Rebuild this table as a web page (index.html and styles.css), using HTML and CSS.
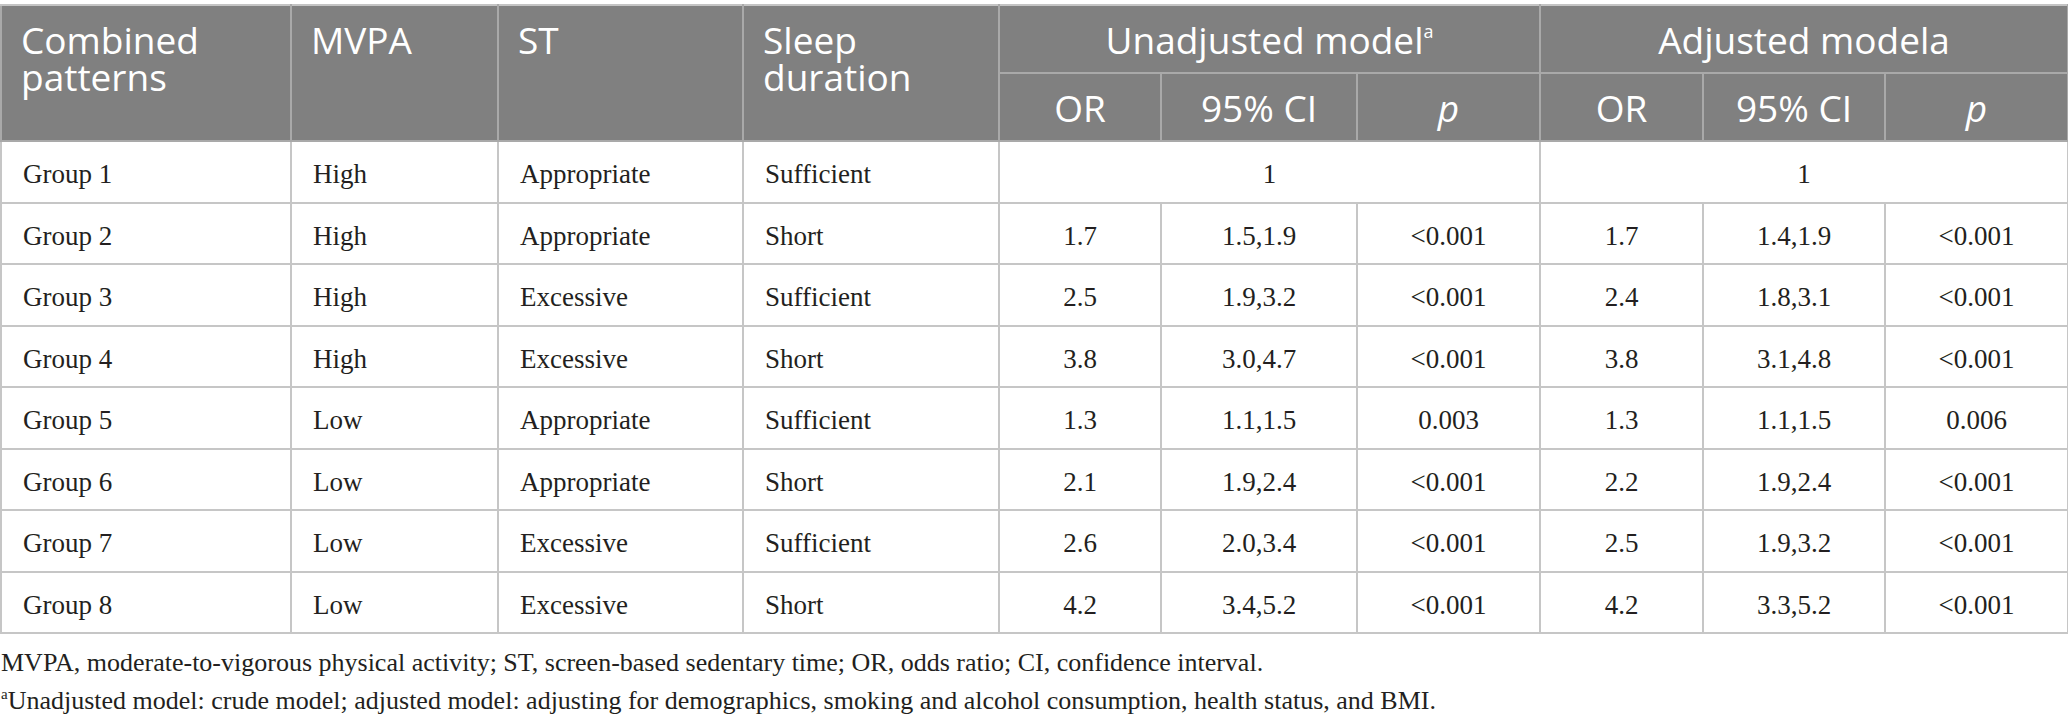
FILE: index.html
```html
<!DOCTYPE html>
<html lang="en">
<head>
<meta charset="utf-8">
<title>Combined patterns</title>
<link rel="stylesheet" href="styles.css">
</head>
<body>
<div class="page">
  <table class="data">
    <colgroup>
      <col class="w1"><col class="w2"><col class="w3"><col class="w4">
      <col class="w5"><col class="w6"><col class="w7">
      <col class="w8"><col class="w9"><col class="w10">
    </colgroup>
    <thead>
      <tr class="h1">
        <th rowspan="2" class="tl">Combined<br>patterns</th>
        <th rowspan="2" class="tl">MVPA</th>
        <th rowspan="2" class="tl">ST</th>
        <th rowspan="2" class="tl">Sleep<br>duration</th>
        <th colspan="3">Unadjusted model<sup>a</sup></th>
        <th colspan="3">Adjusted modela</th>
      </tr>
      <tr class="h2">
        <th>OR</th><th>95% CI</th><th><i>p</i></th>
        <th>OR</th><th>95% CI</th><th><i>p</i></th>
      </tr>
    </thead>
    <tbody>
      <tr>
        <td class="l">Group 1</td><td class="l">High</td><td class="l">Appropriate</td><td class="l">Sufficient</td>
        <td colspan="3">1</td><td colspan="3">1</td>
      </tr>
      <tr>
        <td class="l">Group 2</td><td class="l">High</td><td class="l">Appropriate</td><td class="l">Short</td>
        <td>1.7</td><td>1.5,1.9</td><td>&lt;0.001</td><td>1.7</td><td>1.4,1.9</td><td>&lt;0.001</td>
      </tr>
      <tr>
        <td class="l">Group 3</td><td class="l">High</td><td class="l">Excessive</td><td class="l">Sufficient</td>
        <td>2.5</td><td>1.9,3.2</td><td>&lt;0.001</td><td>2.4</td><td>1.8,3.1</td><td>&lt;0.001</td>
      </tr>
      <tr>
        <td class="l">Group 4</td><td class="l">High</td><td class="l">Excessive</td><td class="l">Short</td>
        <td>3.8</td><td>3.0,4.7</td><td>&lt;0.001</td><td>3.8</td><td>3.1,4.8</td><td>&lt;0.001</td>
      </tr>
      <tr>
        <td class="l">Group 5</td><td class="l">Low</td><td class="l">Appropriate</td><td class="l">Sufficient</td>
        <td>1.3</td><td>1.1,1.5</td><td>0.003</td><td>1.3</td><td>1.1,1.5</td><td>0.006</td>
      </tr>
      <tr>
        <td class="l">Group 6</td><td class="l">Low</td><td class="l">Appropriate</td><td class="l">Short</td>
        <td>2.1</td><td>1.9,2.4</td><td>&lt;0.001</td><td>2.2</td><td>1.9,2.4</td><td>&lt;0.001</td>
      </tr>
      <tr>
        <td class="l">Group 7</td><td class="l">Low</td><td class="l">Excessive</td><td class="l">Sufficient</td>
        <td>2.6</td><td>2.0,3.4</td><td>&lt;0.001</td><td>2.5</td><td>1.9,3.2</td><td>&lt;0.001</td>
      </tr>
      <tr>
        <td class="l">Group 8</td><td class="l">Low</td><td class="l">Excessive</td><td class="l">Short</td>
        <td>4.2</td><td>3.4,5.2</td><td>&lt;0.001</td><td>4.2</td><td>3.3,5.2</td><td>&lt;0.001</td>
      </tr>
    </tbody>
  </table>
  <div class="notes">
    <p>MVPA, moderate-to-vigorous physical activity; ST, screen-based sedentary time; OR, odds ratio; CI, confidence interval.</p>
    <p><sup>a</sup>Unadjusted model: crude model; adjusted model: adjusting for demographics, smoking and alcohol consumption, health status, and BMI.</p>
  </div>
</div>
</body>
</html>
```

FILE: styles.css
```css
html, body {
  margin: 0;
  padding: 0;
  background: #ffffff;
}

.page {
  padding-top: 4px;
  width: 2068px;
}

.data {
  border-collapse: collapse;
  table-layout: fixed;
  width: 2067px;
  font-family: "Liberation Serif", "Times New Roman", serif;
  font-size: 27px;
  color: #231f20;
}

.w1 { width: 290px; }
.w2 { width: 207px; }
.w3 { width: 245px; }
.w4 { width: 256px; }
.w5 { width: 162px; }
.w6 { width: 196px; }
.w7 { width: 183px; }
.w8 { width: 163px; }
.w9 { width: 182px; }
.w10 { width: 183px; }

.data th {
  background: #808080;
  color: #ffffff;
  font-family: "Open Sans", "Noto Sans", sans-serif;
  font-weight: 400;
  font-size: 37px;
  line-height: 37px;
  text-align: center;
  vertical-align: middle;
  border: 2px solid #a9a9a9;
  padding: 0 4px;
}

.data thead tr:first-child th {
  border-top-color: #c4c4c4;
}

.data th.tl {
  text-align: left;
  vertical-align: top;
  padding: 15px 8px 0 19px;
}

.data th sup {
  font-size: 18px;
  line-height: 0;
  vertical-align: 16px;
}

.h1 { height: 68px; }
.h2 { height: 68px; }

.data tbody tr { height: 61.5px; }

.data td {
  border: 2px solid #c6c6c6;
  text-align: center;
  vertical-align: middle;
  padding: 6px 4px 0 4px;
  line-height: 31px;
}

.data td.l {
  text-align: left;
  padding-left: 21px;
}

.notes {
  margin-top: 10px;
  font-family: "Liberation Serif", "Times New Roman", serif;
  font-size: 26px;
  line-height: 38px;
  color: #231f20;
}

.notes p {
  margin: 0;
  padding-left: 1px;
}

.notes sup {
  font-size: 15px;
  line-height: 0;
  vertical-align: 10px;
}
```
